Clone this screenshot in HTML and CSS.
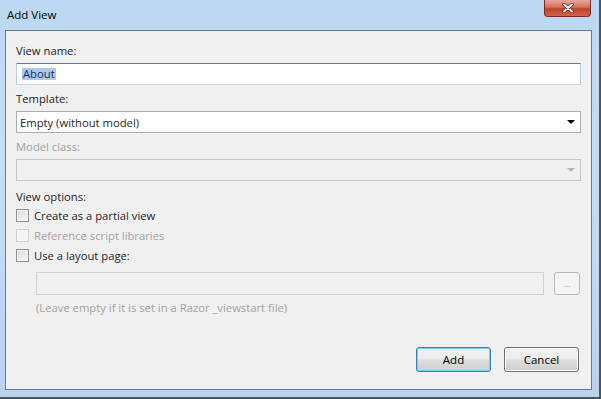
FILE: index.html
```html
<!DOCTYPE html>
<html lang="en">
<head>
    <meta charset="UTF-8">
    <title>Add View</title>
    <link rel="stylesheet" href="styles.css">
</head>
<body>
    <div class="window">
        <div class="titlebar">
            <span class="title">Add View</span>
            <div class="close">
                <svg width="14" height="10" viewBox="0 0 14 10">
                    <path d="M3 1.5 L11 8.5 M11 1.5 L3 8.5" stroke="#5a2218" stroke-width="3.4" stroke-linecap="round"/>
                    <path d="M3 1.5 L11 8.5 M11 1.5 L3 8.5" stroke="#fff" stroke-width="2" stroke-linecap="round"/>
                </svg>
            </div>
        </div>

        <div class="client">
            <div class="field">
                <label class="label">View name:</label>
                <div class="textbox focused"><span class="selected">About</span></div>
            </div>

            <div class="field">
                <label class="label">Template:</label>
                <div class="combo">
                    <span>Empty (without model)</span>
                    <span class="arrow"></span>
                </div>
            </div>

            <div class="field last">
                <label class="label disabled">Model class:</label>
                <div class="combo off">
                    <span></span>
                    <span class="arrow"></span>
                </div>
            </div>

            <div class="options">
                <div class="label">View options:</div>
                <div class="check"><span class="box"></span>Create as a partial view</div>
                <div class="check disabled"><span class="box"></span>Reference script libraries</div>
                <div class="check"><span class="box"></span>Use a layout page:</div>
            </div>

            <div class="layout">
                <div class="layout-row">
                    <div class="textbox off"></div>
                    <div class="browse">...</div>
                </div>
                <div class="hint">(Leave empty if it is set in a Razor _viewstart file)</div>
            </div>

            <div class="buttons">
                <button class="btn default">Add</button>
                <button class="btn">Cancel</button>
            </div>
        </div>
    </div>
</body>
</html>
```

FILE: styles.css
```css
html, body {
    margin: 0;
    padding: 0;
}
body {
    width: 601px;
    height: 399px;
    overflow: hidden;
    font-family: "Open Sans", "Noto Sans", sans-serif;
    font-size: 11.25px;
    color: #1e1e1e;
    background: #fff;
}
.window {
    width: 599px;
    height: 397px;
    border-right: 2px solid #4a5560;
    border-bottom: 2px solid #4a5560;
    background: linear-gradient(to bottom, #bcd7f1, #c6def5 40%, #b9d3ee);
    display: flex;
    flex-direction: column;
}
.titlebar {
    height: 30px;
    display: flex;
    align-items: flex-start;
    justify-content: space-between;
    padding-left: 7px;
    padding-right: 8px;
}
.title {
    margin-top: 7px;
    font-size: 11.5px;
    color: #000;
}
.close {
    width: 45px;
    height: 16px;
    border: 1px solid #7a2a1e;
    border-top: none;
    border-radius: 0 0 4px 4px;
    background: linear-gradient(to bottom, #e8a797, #d5705d 45%, #c2422b 55%, #d1644c);
    display: flex;
    align-items: center;
    justify-content: center;
}
.client {
    margin: 0 7px 7px 5px;
    flex: 1;
    background: #f0f0f0;
    border: 1px solid #6b7b8c;
    padding: 12px 10px 0 10px;
    display: flex;
    flex-direction: column;
}
.field {
    display: flex;
    flex-direction: column;
    margin-bottom: 6px;
}
.field.last {
    margin-bottom: 0;
}
.field .label {
    height: 15px;
    margin-bottom: 5px;
    line-height: 15px;
}
.label.disabled, .check.disabled, .hint {
    color: #a2a2a2;
}
.textbox {
    height: 20px;
    background: #fff;
    border: 1px solid #abadb3;
    border-left-color: #e2e3ea;
    border-right-color: #dbdfe6;
    border-bottom-color: #e3e9ef;
    display: flex;
    align-items: center;
    padding-left: 5px;
}
.textbox.focused {
    border-color: #5c7a97 #b5cfe7 #c5dbee #b5cfe7;
}
.textbox.off {
    flex: 1;
    height: 21px;
    background: #f0f0f0;
    border-color: #cfd2d6;
}
.selected {
    background: #acc9ec;
    color: #1c2d4d;
    line-height: 12px;
    padding: 0 1px;
}
.combo {
    height: 20px;
    background: #fff;
    border: 1px solid #acacac;
    display: flex;
    align-items: center;
    justify-content: space-between;
    padding: 0 5px 0 3px;
}
.combo.off {
    background: #f0f0f0;
    border-color: #c6c6c6;
}
.arrow {
    width: 0;
    height: 0;
    border-left: 4px solid transparent;
    border-right: 4px solid transparent;
    border-top: 4px solid #000;
}
.combo.off .arrow {
    border-top-color: #b4b4b4;
}
.options {
    display: flex;
    flex-direction: column;
    margin-top: 8px;
}
.options .label {
    height: 16px;
    line-height: 16px;
}
.check {
    height: 20px;
    display: flex;
    align-items: center;
}
.box {
    width: 11px;
    height: 11px;
    margin-right: 5px;
    border: 1px solid #8f8f8f;
    background: linear-gradient(135deg, #dcdcdc, #f6f6f6);
    box-shadow: inset 0 0 0 1px #f4f4f4;
}
.check.disabled .box {
    border-color: #d0d0d0;
    background: #f4f4f4;
}
.layout {
    margin: 7px 0 0 20px;
}
.layout-row {
    display: flex;
    gap: 10px;
    height: 23px;
}
.browse {
    width: 24px;
    border: 1px solid #b8b8b8;
    border-radius: 3px;
    background: #f4f4f4;
    color: #aaa;
    font-size: 9px;
    display: flex;
    align-items: center;
    justify-content: center;
    margin-right: 1px;
}
.hint {
    margin-top: 5px;
    line-height: 16px;
}
.buttons {
    display: flex;
    justify-content: flex-end;
    gap: 13px;
    margin-top: 31px;
    padding-right: 2px;
}
.btn {
    width: 75px;
    height: 25px;
    font-family: inherit;
    font-size: 11.5px;
    color: #000;
    border: 1px solid #707070;
    border-radius: 3px;
    background: linear-gradient(to bottom, #f2f2f2, #ebebeb 48%, #dddddd 52%, #cfcfcf);
    box-shadow: inset 0 0 0 1px #fcfcfc;
    padding: 0;
}
.btn.default {
    border-color: #3c7fb1;
    box-shadow: inset 0 0 0 1px #6fd3f5;
}
```
